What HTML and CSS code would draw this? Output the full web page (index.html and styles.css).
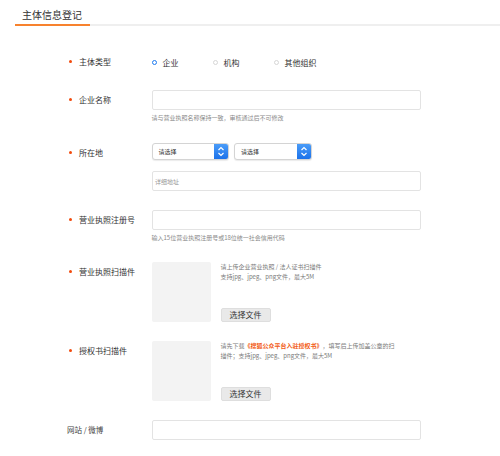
FILE: index.html
```html
<!DOCTYPE html>
<html lang="zh-CN">
<head>
<meta charset="utf-8">
<title>主体信息登记</title>
<link rel="stylesheet" href="styles.css">
</head>
<body>
<div class="page">
  <div class="header"><span class="title">主体信息登记</span></div>
  <div class="form">
    <div class="row row-radio">
      <div class="label"><span class="dot"></span>主体类型</div>
      <div class="radios">
        <span class="radio"><i class="circle checked"></i>企业</span>
        <span class="radio"><i class="circle"></i>机构</span>
        <span class="radio"><i class="circle"></i>其他组织</span>
      </div>
    </div>
    <div class="row r2">
      <div class="label"><span class="dot"></span>企业名称</div>
      <div class="field">
        <div class="input"></div>
        <div class="hint">请与营业执照名称保持一致，审核通过后不可修改</div>
      </div>
    </div>
    <div class="row r3">
      <div class="label"><span class="dot"></span>所在地</div>
      <div class="field">
        <div class="selects">
          <div class="select"><span class="sel-text">请选择</span><span class="sel-btn"><svg width="8" height="11" viewBox="0 0 8 11"><path d="M1.5 4 L4 1.5 L6.5 4 M1.5 7 L4 9.5 L6.5 7" fill="none" stroke="#fff" stroke-width="1.2"/></svg></span></div>
          <div class="select"><span class="sel-text">请选择</span><span class="sel-btn"><svg width="8" height="11" viewBox="0 0 8 11"><path d="M1.5 4 L4 1.5 L6.5 4 M1.5 7 L4 9.5 L6.5 7" fill="none" stroke="#fff" stroke-width="1.2"/></svg></span></div>
        </div>
        <div class="input addr"><span class="placeholder">详细地址</span></div>
      </div>
    </div>
    <div class="row r4">
      <div class="label"><span class="dot"></span>营业执照注册号</div>
      <div class="field">
        <div class="input"></div>
        <div class="hint">输入15位营业执照注册号或18位统一社会信用代码</div>
      </div>
    </div>
    <div class="row r5">
      <div class="label"><span class="dot"></span>营业执照扫描件</div>
      <div class="upload">
        <div class="preview"></div>
        <div class="up-side">
          <div class="up-text"><div>请上传企业营业执照 / 法人证书扫描件</div><div>支持jpg、jpeg、png文件，最大5M</div></div>
          <div class="btn">选择文件</div>
        </div>
      </div>
    </div>
    <div class="row r6">
      <div class="label"><span class="dot"></span>授权书扫描件</div>
      <div class="upload tall">
        <div class="preview"></div>
        <div class="up-side">
          <div class="up-text"><div>请先下载<b class="link">《搜狐公众平台入驻授权书》</b>，填写后上传加盖公章的扫</div><div>描件；支持jpg、jpeg、png文件，最大5M</div></div>
          <div class="btn">选择文件</div>
        </div>
      </div>
    </div>
    <div class="row r7">
      <div class="label plain">网站 / 微博</div>
      <div class="field">
        <div class="input"></div>
      </div>
    </div>
  </div>
</div>
</body>
</html>
```

FILE: styles.css
```css
* { box-sizing: border-box; }
html, body { margin: 0; padding: 0; background: #fff; }
body {
  font-family: "Noto Sans CJK SC", "Noto Sans", sans-serif;
  color: #333;
  width: 500px;
  height: 456px;
  overflow: hidden;
  text-spacing-trim: space-all;
}
.page { padding-left: 15px; }
.header {
  border-bottom: 2px solid #efefef;
  height: 26px;
}
.title {
  display: inline-block;
  font-size: 10px;
  line-height: 14px;
  padding: 8px 8px 2px 7px;
  border-bottom: 2px solid #f7822e;
  color: #333;
}
.form { padding-left: 52px; }
.row { display: flex; align-items: flex-start; }
.label {
  width: 84.5px;
  flex: none;
  font-size: 8px;
  line-height: 20px;
  color: #333;
  white-space: nowrap;
}
.dot {
  display: inline-block;
  width: 3px;
  height: 3px;
  border-radius: 50%;
  background: #f24a0c;
  margin-left: 1.5px;
  margin-right: 7.5px;
  vertical-align: middle;
  position: relative;
  top: -1px;
}
.row-radio { margin-top: 28px; }
.row-radio .label { line-height: 16px; }
.radios { display: flex; height: 16px; align-items: center; }
.radio {
  width: 61px;
  font-size: 8px;
  display: flex;
  align-items: center;
  color: #333;
}
.circle {
  display: inline-block;
  width: 5px;
  height: 5px;
  border-radius: 50%;
  border: 1px solid #d6d6d6;
  margin-right: 6px;
  background: #fff;
}
.circle.checked { border: 1.5px solid #1e7bf0; }
.field { display: flex; flex-direction: column; }
.input {
  width: 269.5px;
  height: 19.5px;
  border: 1px solid #e3e3e3;
  border-radius: 2px;
  background: #fff;
}
.hint {
  font-size: 6px;
  line-height: 8px;
  color: #8a8a8a;
  margin-top: 4.5px;
  white-space: nowrap;
}
.r2 { margin-top: 20px; }
.r3 { margin-top: 20.5px; }
.selects { display: flex; gap: 5px; }
.select {
  width: 77.5px;
  height: 17px;
  border: 1px solid #d4d4d4;
  border-radius: 3px;
  display: flex;
  align-items: center;
  justify-content: space-between;
  box-shadow: 0 1px 1px rgba(0,0,0,0.08);
  overflow: hidden;
  background: #fff;
}
.sel-text { font-size: 6px; color: #333; padding-left: 6px; }
.sel-btn {
  width: 14px;
  height: 100%;
  background: linear-gradient(#4a9cf8, #1c72ea);
  display: flex;
  align-items: center;
  justify-content: center;
}
.addr {
  margin-top: 11.5px;
  height: 20px;
  display: flex;
  align-items: center;
}
.placeholder { font-size: 6px; color: #999; padding-left: 2.5px; }
.r4 { margin-top: 19px; }
.r5 { margin-top: 20px; }
.upload { display: flex; }
.preview {
  width: 59px;
  height: 59.5px;
  background: #f3f3f3;
  border-radius: 2px;
  flex: none;
}
.tall .preview { height: 60px; }
.up-side {
  margin-left: 10px;
  display: flex;
  flex-direction: column;
  justify-content: space-between;
}
.up-text {
  width: 190px;
  font-size: 6px;
  line-height: 10px;
  color: #7a7a7a;
  margin-top: -0.5px;
  white-space: nowrap;
}
.link { color: #f25a12; font-weight: bold; }
.btn {
  width: 50px;
  height: 14px;
  background: #e9e9e9;
  border: 1px solid #dedede;
  border-radius: 2px;
  font-size: 8px;
  line-height: 12px;
  text-align: center;
  color: #333;
}
.r6 { margin-top: 19.5px; }
.r7 { margin-top: 18.5px; }
.r7 .input { height: 20px; }
.label.plain { padding-left: 0; font-size: 7.5px; color: #444; }
```
